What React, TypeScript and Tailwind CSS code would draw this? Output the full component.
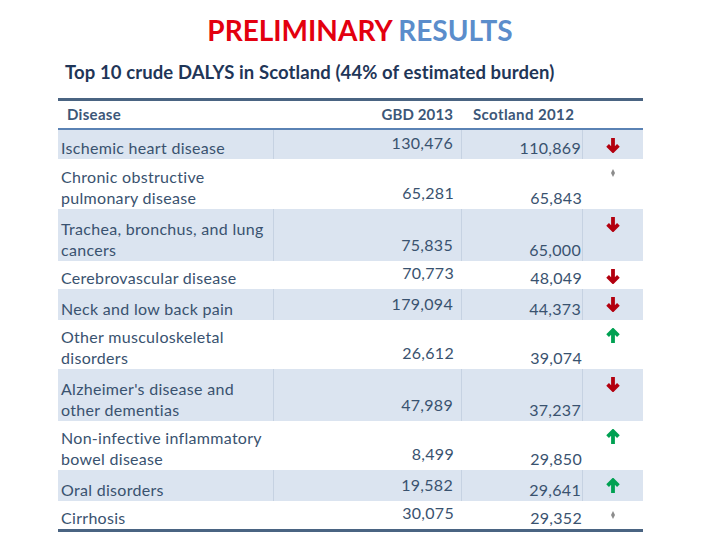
const rows = [
  { name: ["Ischemic heart disease"], gbd: "130,476", sco: "110,869", trend: "down", h: 29, shade: true },
  { name: ["Chronic obstructive", "pulmonary disease"], gbd: "65,281", sco: "65,843", trend: "flat", h: 50, shade: false },
  { name: ["Trachea, bronchus, and lung", "cancers"], gbd: "75,835", sco: "65,000", trend: "down", h: 52, shade: true },
  { name: ["Cerebrovascular disease"], gbd: "70,773", sco: "48,049", trend: "down", h: 28, shade: false },
  { name: ["Neck and low back pain"], gbd: "179,094", sco: "44,373", trend: "down", h: 31, shade: true },
  { name: ["Other musculoskeletal", "disorders"], gbd: "26,612", sco: "39,074", trend: "up", h: 49, shade: false },
  { name: ["Alzheimer's disease and", "other dementias"], gbd: "47,989", sco: "37,237", trend: "down", h: 52, shade: true },
  { name: ["Non-infective inflammatory", "bowel disease"], gbd: "8,499", sco: "29,850", trend: "up", h: 49, shade: false },
  { name: ["Oral disorders"], gbd: "19,582", sco: "29,641", trend: "up", h: 31, shade: true },
  { name: ["Cirrhosis"], gbd: "30,075", sco: "29,352", trend: "flat", h: 28, shade: false },
];

function Trend({ kind }: { kind: string }) {
  if (kind === "flat") {
    return (
      <svg width="6" height="8" viewBox="0 0 6 8" className="mt-[10px]">
        <path d="M3 0 L5 4 L3 8 L1 4 Z" fill="#8c8c8c" />
      </svg>
    );
  }
  const up = kind === "up";
  return (
    <svg
      width="14"
      height="15"
      viewBox="0 0 14 15"
      className="mt-[8px]"
      style={{ transform: up ? "rotate(180deg)" : undefined }}
    >
      <path
        d="M7 0 V12.5 M1.6 7.4 L7 12.8 L12.4 7.4"
        fill="none"
        stroke={up ? "#00a152" : "#b3000f"}
        strokeWidth="3.8"
      />
    </svg>
  );
}

export default function App() {
  return (
    <div className="h-[540px] w-[720px] bg-white font-['Lato',sans-serif]">
      <h1 className="pt-[13px] text-center text-[28px] font-bold leading-[34px]">
        <span className="text-[#e3000f]">PRELIMINARY</span>{" "}
        <span className="text-[#5b8dcb]">RESULTS</span>
      </h1>
      <p className="mt-[14px] pl-[65px] text-[18.5px] font-bold leading-[22px] tracking-[0.1px] text-[#1f3658]">
        Top 10 crude DALYS in Scotland (44% of estimated burden)
      </p>

      <div className="ml-[58px] mt-[15px] w-[585px] border-t-[3px] border-[#4a6482]">
        <div className="grid h-[29px] grid-cols-[216px_188px_121px_60px] items-center border-b-2 border-[#5a82b4] text-[15px] font-bold text-[#3c5778]">
          <div className="pl-[9px] tracking-[0.3px]">Disease</div>
          <div className="pr-[9px] text-right tracking-[0.1px]">GBD 2013</div>
          <div className="pl-[11px] tracking-[0.4px]">Scotland 2012</div>
          <div />
        </div>

        {rows.map((r) => (
          <div
            key={r.gbd}
            className={`grid grid-cols-[216px_188px_121px_60px] text-[16px] leading-[21px] tracking-[0.3px] text-[#39526f] ${
              r.shade ? "bg-[#dbe4f0]" : "bg-white"
            }`}
            style={{ height: r.h }}
          >
            <div
              className={`flex flex-col justify-end pb-[1px] pl-[3px] ${
                r.shade ? "border-r border-[#c6d2e2]" : ""
              }`}
            >
              {r.name.map((n) => (
                <span key={n}>{n}</span>
              ))}
            </div>
            <div
              className={`flex items-end justify-end pb-[6px] pr-[8px] ${
                r.shade ? "border-r border-[#c6d2e2]" : ""
              }`}
            >
              {r.gbd}
            </div>
            <div
              className={`flex items-end justify-end pb-[1px] pr-[1px] ${
                r.shade ? "border-r border-[#c6d2e2]" : ""
              }`}
            >
              {r.sco}
            </div>
            <div className="flex justify-center">
              <Trend kind={r.trend} />
            </div>
          </div>
        ))}
        <div className="h-[3px] bg-[#4a6482]" />
      </div>
    </div>
  );
}
